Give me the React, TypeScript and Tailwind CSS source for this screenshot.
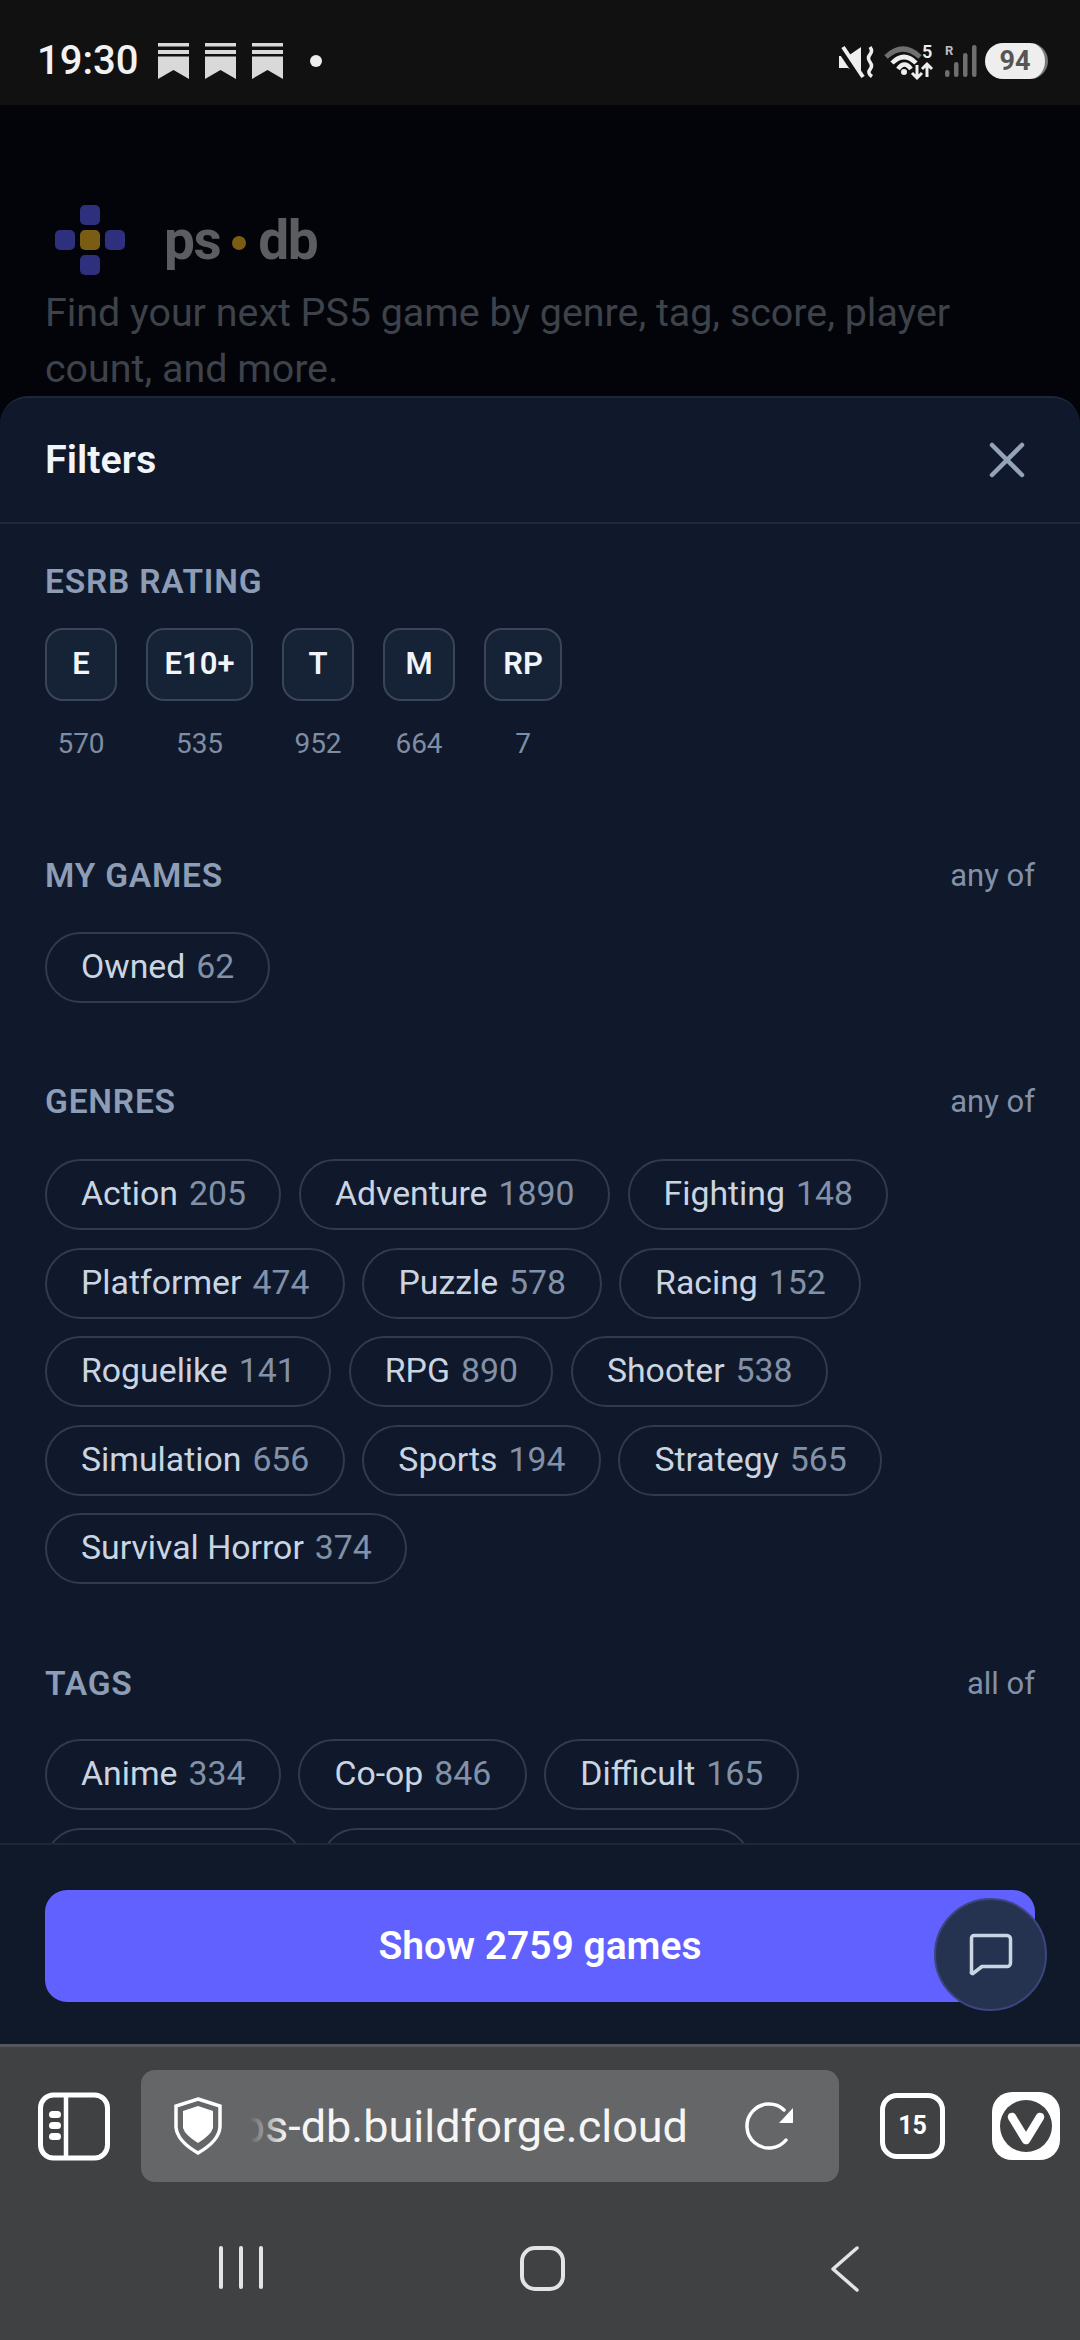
const rating = [
  { l: "E", c: "570", w: "w-[72px]" },
  { l: "E10+", c: "535", w: "w-[107px]" },
  { l: "T", c: "952", w: "w-[72px]" },
  { l: "M", c: "664", w: "w-[72px]" },
  { l: "RP", c: "7", w: "w-[78px]" },
];
const genres: [string, string][] = [
  ["Action", "205"], ["Adventure", "1890"], ["Fighting", "148"], ["Platformer", "474"], ["Puzzle", "578"], ["Racing", "152"],
  ["Roguelike", "141"], ["RPG", "890"], ["Shooter", "538"], ["Simulation", "656"], ["Sports", "194"], ["Strategy", "565"], ["Survival Horror", "374"],
];
const tags: [string, string][] = [["Anime", "334"], ["Co-op", "846"], ["Difficult", "165"]];

function Chip({ n, c }: { n: string; c: string }) {
  return (
    <div className="h-[71px] pl-[34px] pr-[33.5px] rounded-full border-2 border-[#2f3b50] flex items-center gap-[11px] text-[33.8px] whitespace-nowrap">
      <span className="text-[#cbd5e1]">{n}</span>
      <span className="text-[#8291a8]">{c}</span>
    </div>
  );
}
function Head({ t, m }: { t: string; m?: string }) {
  return (
    <div className="h-[44px] flex items-center justify-between">
      <span className="text-[33.5px] font-semibold text-[#8e9db6] tracking-[0.8px]">{t}</span>
      {m && <span className="text-[31px] text-[#8291a8]">{m}</span>}
    </div>
  );
}
function Bookmark() {
  return (
    <svg width="31" height="36" viewBox="0 0 31 36" className="shrink-0">
      <rect x="0" y="0" width="31" height="3.5" fill="#d9d9d9" />
      <rect x="0" y="7" width="31" height="4" fill="#d9d9d9" />
      <path d="M0 13.5H31V36L15.5 27L0 36Z" fill="#d9d9d9" />
    </svg>
  );
}

export default function App() {
  return (
    <div className="w-[1080px] h-[2340px] flex flex-col overflow-hidden bg-[#020409] font-['Roboto',sans-serif]">
      {/* status bar */}
      <div className="h-[105px] shrink-0 bg-[#111111] flex items-center pl-[37px] pr-[32px] pt-[17px]">
        <span className="text-[40px] font-medium text-[#f2f2f2] w-[121px]">19:30</span>
        <div className="flex gap-[16px]">
          <Bookmark />
          <Bookmark />
          <Bookmark />
        </div>
        <div className="w-[12px] h-[12px] rounded-full bg-[#eeeeee] ml-[27px]" />
        <div className="flex-1" />
        <svg width="106" height="50" viewBox="0 0 106 50" className="shrink-0">
          <path d="M0 20H9L22 11V41L9 32H0Z" fill="#eeeeee" />
          <path d="M-2 9L23 46" stroke="#111" strokeWidth="6" />
          <path d="M4 11L24 41" stroke="#eeeeee" strokeWidth="4" fill="none" />
          <path d="M31 11q3 4 0 7.5t0 7.5t0 7.5t2 7" stroke="#eeeeee" strokeWidth="3.5" fill="none" />
          <path d="M47 21Q64 5 81 21" stroke="#6f6f6f" strokeWidth="5" fill="none" />
          <path d="M53 27Q65 15 77 27M59 33Q65.5 24 72 33" stroke="#eeeeee" strokeWidth="4.5" fill="none" />
          <circle cx="65" cy="36" r="3" fill="#eeeeee" />
          <path d="M78 29V42M73 37l5 5 5-5M88 41V28M83 33l5-5 5 5" stroke="#eeeeee" strokeWidth="3" fill="none" />
          <text x="83" y="22" fontSize="18" fontWeight="600" fill="#eeeeee">5</text>
        </svg>
        <svg width="40" height="50" viewBox="0 0 40 50" className="shrink-0">
          <text x="0" y="19" fontSize="13" fontWeight="700" fill="#bdbdbd">R</text>
          <rect x="0" y="34" width="4.5" height="7" rx="2.2" fill="#6f6f6f" />
          <rect x="9" y="26" width="4.5" height="15" rx="2.2" fill="#6f6f6f" />
          <rect x="18" y="17" width="4.5" height="24" rx="2.2" fill="#6f6f6f" />
          <rect x="27" y="9" width="4.5" height="32" rx="2.2" fill="#6f6f6f" />
        </svg>
        <div className="w-[63px] h-[36px] rounded-full bg-[#eeeeee] flex items-center justify-center text-[27px] font-bold text-[#555555] border-r-[3px] border-[#777777]">
          94
        </div>
      </div>

      {/* page behind the sheet */}
      <div className="h-[291px] shrink-0 pl-[45px] pr-[70px] pt-[100px]">
        <div className="flex items-center h-[70px]">
          <svg width="70" height="70" viewBox="0 0 70 70" className="ml-[10px] shrink-0">
            <rect x="25" y="0" width="20" height="20" rx="5" fill="#2e2f7d" />
            <rect x="0" y="25" width="20" height="20" rx="5" fill="#2e2f7d" />
            <rect x="25" y="25" width="20" height="20" rx="5" fill="#7b5c14" />
            <rect x="50" y="25" width="20" height="20" rx="5" fill="#2e2f7d" />
            <rect x="25" y="50" width="20" height="20" rx="5" fill="#2e2f7d" />
          </svg>
          <div className="ml-[39px] flex items-center text-[55px] font-bold text-[#5c5d60] tracking-[-1.5px] leading-none">
            <span>ps</span>
            <span className="w-[14px] h-[14px] rounded-full bg-[#7b5c14] mx-[12px] mt-[6px]" />
            <span>db</span>
          </div>
        </div>
        <p className="mt-[10px] text-[39.4px] leading-[56px] text-[#3e424a]">Find your next PS5 game by genre, tag, score, player count, and more.</p>
      </div>

      {/* sheet */}
      <div className="flex-1 min-h-0 flex flex-col bg-[#0f192b] rounded-t-[28px] border-t-2 border-[#1c2739]">
        <div className="h-[126px] shrink-0 border-b-2 border-[#1f2a3c] flex items-center justify-between pl-[45px] pr-[55px]">
          <span className="text-[39.5px] font-semibold text-[#f1f5f9]">Filters</span>
          <svg width="36" height="36" viewBox="0 0 36 36">
            <path d="M3 3L33 33M33 3L3 33" stroke="#94a3b8" strokeWidth="4.5" strokeLinecap="round" />
          </svg>
        </div>
        <div className="flex-1 min-h-0 overflow-hidden px-[45px] pt-[36px]">
          <Head t="ESRB RATING" />
          <div className="flex gap-[29px] mt-[24px]">
            {rating.map((r) => (
              <div key={r.l} className={`${r.w} flex flex-col items-center`}>
                <div className="w-full h-[73px] rounded-[18px] border-2 border-[#3a4558] bg-[#162236] flex items-center justify-center text-[31px] font-semibold text-[#f1f5f9]">
                  {r.l}
                </div>
                <span className="mt-[23px] h-[40px] flex items-center text-[28px] text-[#7f8da4]">{r.c}</span>
              </div>
            ))}
          </div>
          <div className="mt-[90px]">
            <Head t="MY GAMES" m="any of" />
            <div className="flex flex-wrap gap-[17.5px] mt-[34px]">
              <Chip n="Owned" c="62" />
            </div>
          </div>
          <div className="mt-[77px]">
            <Head t="GENRES" m="any of" />
            <div className="flex flex-wrap gap-[17.5px] mt-[35px]">
              {genres.map(([n, c]) => (
                <Chip key={n} n={n} c={c} />
              ))}
            </div>
          </div>
          <div className="mt-[78px]">
            <Head t="TAGS" m="all of" />
            <div className="flex flex-wrap gap-[17.5px] mt-[33px]">
              {tags.map(([n, c]) => (
                <Chip key={n} n={n} c={c} />
              ))}
              <div className="w-[258px] h-[71px] rounded-full border-2 border-[#2f3b50]" />
              <div className="w-[430px] h-[71px] rounded-full border-2 border-[#2f3b50]" />
            </div>
          </div>
        </div>
        {/* footer */}
        <div className="h-[201px] shrink-0 border-t-2 border-[#1c2739] bg-[#101929] px-[45px] pt-[45px] relative">
          <div className="h-[112px] rounded-[22px] bg-[#6161ff] flex items-center justify-center text-[39px] font-semibold text-white">
            Show 2759 games
          </div>
          <div className="absolute left-[934px] top-[53px] w-[113px] h-[113px] rounded-full bg-[#263350] border-2 border-[#3b4680] flex items-center justify-center">
            <svg width="44" height="44" viewBox="0 0 44 44">
              <path d="M5 2.5H38A3.5 3.5 0 0 1 41.5 6V30A3.5 3.5 0 0 1 38 33.5H13L4.5 40A1 1 0 0 1 2.5 39V5A2.5 2.5 0 0 1 5 2.5Z" fill="none" stroke="#cbd5e1" strokeWidth="3.5" strokeLinejoin="round" />
            </svg>
          </div>
        </div>
      </div>

      {/* browser toolbar */}
      <div className="h-[296px] shrink-0 bg-[#404143] border-t-[3px] border-[#55575a] flex flex-col">
        <div className="h-[135px] shrink-0 flex items-start pt-[23px] pl-[38px]">
          <svg width="72" height="112" viewBox="0 0 72 112" className="shrink-0">
            <rect x="2.5" y="25" width="67" height="63" rx="13" fill="none" stroke="#fff" strokeWidth="5" />
            <path d="M28 25V88" stroke="#fff" strokeWidth="4.5" />
            <rect x="11" y="41" width="12" height="7" rx="3.5" fill="#fff" />
            <rect x="11" y="52" width="12" height="7" rx="3.5" fill="#fff" />
            <rect x="11" y="63" width="12" height="7" rx="3.5" fill="#fff" />
          </svg>
          <div className="ml-[31px] w-[698px] h-[112px] rounded-[14px] bg-[#656668] shrink-0 flex items-center">
            <svg width="48" height="58" viewBox="0 0 48 58" className="ml-[33px] shrink-0">
              <path d="M24 2L46 9V30Q45 44 24 56Q3 44 2 30V9Z" fill="none" stroke="#fff" strokeWidth="3.5" />
              <path d="M24 9L39 14V31Q37 38 24 46Q11 38 9 31V14Z" fill="#fff" />
            </svg>
            <div className="relative ml-[28px] w-[438px] h-[70px] overflow-hidden flex justify-end items-center pt-[2px]">
              <span className="text-[45px] text-[#f5f5f5] whitespace-nowrap">ps-db.buildforge.cloud</span>
              <div className="absolute left-0 top-0 bottom-0 w-[36px] bg-gradient-to-r from-[#656668] to-transparent" />
            </div>
            <svg width="50" height="50" viewBox="0 0 50 50" className="ml-[56px] shrink-0">
              <path d="M40 9A22 22 0 1 0 42 39" fill="none" stroke="#fff" strokeWidth="3.5" strokeLinecap="round" />
              <path d="M49 7V22H35Z" fill="#fff" />
            </svg>
          </div>
          <div className="ml-[41px] mt-[23px] w-[65px] h-[66px] rounded-[17px] border-[5px] border-white flex items-center justify-center text-[25px] font-bold text-white shrink-0">
            15
          </div>
          <svg width="68" height="68" viewBox="0 0 68 68" className="ml-[47px] mt-[22px] shrink-0">
            <rect x="0" y="0" width="68" height="68" rx="20" fill="#fff" />
            <circle cx="34" cy="34" r="26" fill="#404143" />
            <path d="M20 25L34 48L48 25" fill="none" stroke="#fff" strokeWidth="8.5" strokeLinecap="round" strokeLinejoin="round" />
          </svg>
        </div>
        <div className="flex-1 flex items-start pt-[64px] pl-[219px]">
          <div className="flex gap-[16px]">
            <div className="w-[4px] h-[43px] rounded-[2px] bg-[#e4e4e4]" />
            <div className="w-[4px] h-[43px] rounded-[2px] bg-[#e4e4e4]" />
            <div className="w-[4px] h-[43px] rounded-[2px] bg-[#e4e4e4]" />
          </div>
          <div className="ml-[257px] w-[45px] h-[45px] rounded-[15px] border-[4px] border-[#e4e4e4]" />
          <svg width="30" height="46" viewBox="0 0 30 46" className="ml-[265px] shrink-0">
            <path d="M27 2L3 23L27 44" fill="none" stroke="#e4e4e4" strokeWidth="3.5" strokeLinecap="round" strokeLinejoin="round" />
          </svg>
        </div>
      </div>
    </div>
  );
}
